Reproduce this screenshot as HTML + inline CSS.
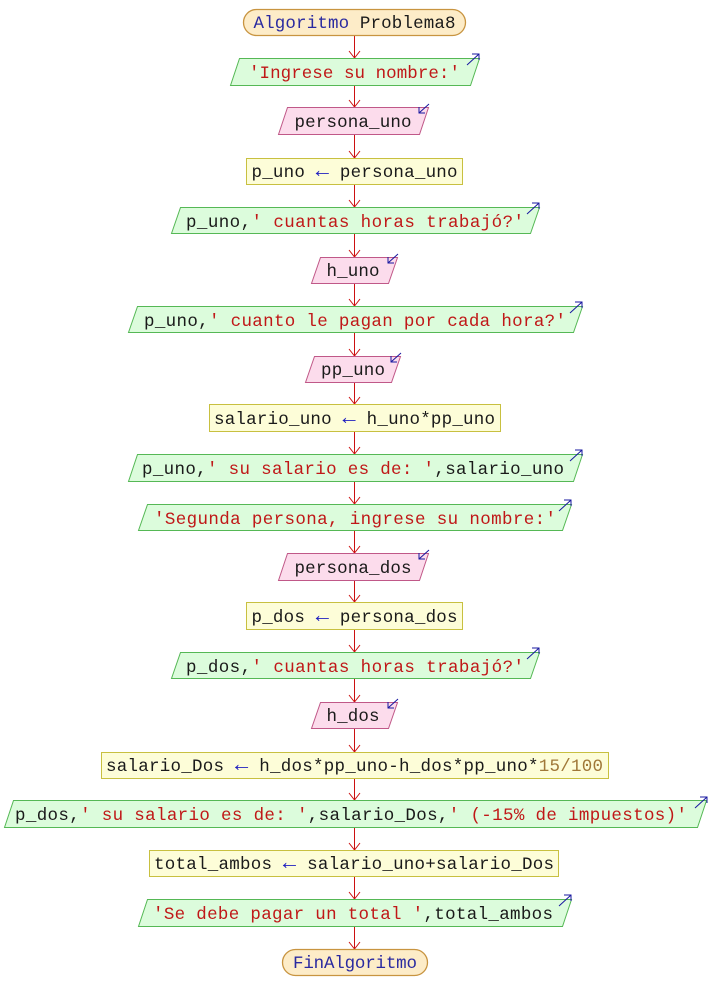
<!DOCTYPE html>
<html><head><meta charset="utf-8"><style>
html,body{margin:0;padding:0;background:#fff;width:709px;height:1007px;overflow:hidden}
svg{display:block}
text{font-family:"Liberation Mono","Courier New",monospace;font-size:17.5px;fill:#1a1a1a}
.s{fill:#c01818}.k{fill:#2a2aa0}.n{fill:#a07838}.b{fill:#2020c0;font-size:22px}
.o{fill:#dcfcdc;stroke:#55b855;stroke-width:1}
.i{fill:#fcdcec;stroke:#c05888;stroke-width:1}
.r{fill:#fdfdd8;stroke:#c8c040;stroke-width:1}
.t{fill:#fdecc8;stroke:#c89440;stroke-width:1.3}
.a{stroke:#cc1010;stroke-width:1;fill:none}
.ba{stroke:#1818a0;stroke-width:1;fill:none}
</style></head><body>
<svg width="709" height="1007" viewBox="0 0 709 1007" xmlns="http://www.w3.org/2000/svg">
<g class="a">
<path d="M354.5 35V58M349 51l5.5 7 5.5-7"/>
<path d="M354.5 85V107M349 100l5.5 7 5.5-7"/>
<path d="M354.5 134V158M349 151l5.5 7 5.5-7"/>
<path d="M354.5 184V207M349 200l5.5 7 5.5-7"/>
<path d="M354.5 233V257M349 250l5.5 7 5.5-7"/>
<path d="M354.5 283V306M349 299l5.5 7 5.5-7"/>
<path d="M354.5 332V356M349 349l5.5 7 5.5-7"/>
<path d="M354.5 382V404M349 397l5.5 7 5.5-7"/>
<path d="M354.5 431V454M349 447l5.5 7 5.5-7"/>
<path d="M354.5 481V504M349 497l5.5 7 5.5-7"/>
<path d="M354.5 530V553M349 546l5.5 7 5.5-7"/>
<path d="M354.5 580V602M349 595l5.5 7 5.5-7"/>
<path d="M354.5 629V652M349 645l5.5 7 5.5-7"/>
<path d="M354.5 678V702M349 695l5.5 7 5.5-7"/>
<path d="M354.5 728V752M349 745l5.5 7 5.5-7"/>
<path d="M354.5 778V800M349 793l5.5 7 5.5-7"/>
<path d="M354.5 827V850M349 843l5.5 7 5.5-7"/>
<path d="M354.5 876V899M349 892l5.5 7 5.5-7"/>
<path d="M354.5 926V949M349 942l5.5 7 5.5-7"/>
</g>
<rect class="t" x="243.5" y="9.5" width="222" height="26" rx="13"/>
<text x="354.5" y="28" text-anchor="middle" textLength="202" lengthAdjust="spacing"><tspan class="k">Algoritmo</tspan> Problema8</text>

<polygon class="o" points="239.5,58.5 479.5,58.5 470.5,85.5 230.5,85.5"/>
<text x="354.5" y="78" text-anchor="middle" class="s" textLength="211" lengthAdjust="spacing">'Ingrese su nombre:'</text>
<path class="ba" d="M467 65l12-11M472 54h7v6"/>

<polygon class="i" points="287.5,107.5 428.5,107.5 419.5,134.5 278.5,134.5"/>
<text x="353" y="127" text-anchor="middle" textLength="117" lengthAdjust="spacing">persona_uno</text>
<path class="ba" d="M429 104l-10 9M419 107v6h6"/>

<rect class="r" x="246.5" y="158.5" width="216" height="26"/>
<text x="354.5" y="177" text-anchor="middle" textLength="206" lengthAdjust="spacing">p_uno <tspan class="b">←</tspan> persona_uno</text>

<polygon class="o" points="180.5,207.5 539.5,207.5 530.5,233.5 171.5,233.5"/>
<text x="355" y="227" text-anchor="middle" textLength="338" lengthAdjust="spacing">p_uno,<tspan class="s">' cuantas horas trabajó?'</tspan></text>
<path class="ba" d="M527 214l12-11M532 203h7v6"/>

<polygon class="i" points="320.5,257.5 397.5,257.5 388.5,283.5 311.5,283.5"/>
<text x="353" y="276" text-anchor="middle" textLength="53" lengthAdjust="spacing">h_uno</text>
<path class="ba" d="M398 254l-10 9M388 257v6h6"/>

<polygon class="o" points="137.5,306.5 582.5,306.5 573.5,332.5 128.5,332.5"/>
<text x="355" y="326" text-anchor="middle" textLength="422" lengthAdjust="spacing">p_uno,<tspan class="s">' cuanto le pagan por cada hora?'</tspan></text>
<path class="ba" d="M570 313l12-11M575 302h7v6"/>

<polygon class="i" points="314.5,356.5 400.5,356.5 391.5,382.5 305.5,382.5"/>
<text x="353" y="375" text-anchor="middle" textLength="64" lengthAdjust="spacing">pp_uno</text>
<path class="ba" d="M401 353l-10 9M391 356v6h6"/>

<rect class="r" x="209.5" y="404.5" width="291" height="27"/>
<text x="354.5" y="424" text-anchor="middle" textLength="281" lengthAdjust="spacing">salario_uno <tspan class="b">←</tspan> h_uno*pp_uno</text>

<polygon class="o" points="137.5,454.5 582.5,454.5 573.5,481.5 128.5,481.5"/>
<text x="353" y="474" text-anchor="middle" textLength="422" lengthAdjust="spacing">p_uno,<tspan class="s">' su salario es de: '</tspan>,salario_uno</text>
<path class="ba" d="M570 461l12-11M575 450h7v6"/>

<polygon class="o" points="147.5,504.5 571.5,504.5 562.5,530.5 138.5,530.5"/>
<text x="355" y="524" text-anchor="middle" class="s" textLength="402" lengthAdjust="spacing">'Segunda persona, ingrese su nombre:'</text>
<path class="ba" d="M559 511l12-11M564 500h7v6"/>

<polygon class="i" points="287.5,553.5 428.5,553.5 419.5,580.5 278.5,580.5"/>
<text x="353" y="573" text-anchor="middle" textLength="117" lengthAdjust="spacing">persona_dos</text>
<path class="ba" d="M429 550l-10 9M419 553v6h6"/>

<rect class="r" x="246.5" y="602.5" width="216" height="27"/>
<text x="354.5" y="622" text-anchor="middle" textLength="206" lengthAdjust="spacing">p_dos <tspan class="b">←</tspan> persona_dos</text>

<polygon class="o" points="180.5,652.5 539.5,652.5 530.5,678.5 171.5,678.5"/>
<text x="355" y="672" text-anchor="middle" textLength="338" lengthAdjust="spacing">p_dos,<tspan class="s">' cuantas horas trabajó?'</tspan></text>
<path class="ba" d="M527 659l12-11M532 648h7v6"/>

<polygon class="i" points="320.5,702.5 397.5,702.5 388.5,728.5 311.5,728.5"/>
<text x="353" y="721" text-anchor="middle" textLength="53" lengthAdjust="spacing">h_dos</text>
<path class="ba" d="M398 699l-10 9M388 702v6h6"/>

<rect class="r" x="101.5" y="752.5" width="507" height="26"/>
<text x="354.5" y="771" text-anchor="middle" textLength="497" lengthAdjust="spacing">salario_Dos <tspan class="b">←</tspan> h_dos*pp_uno-h_dos*pp_uno*<tspan class="n">15/100</tspan></text>

<polygon class="o" points="13.5,800.5 706.5,800.5 697.5,827.5 4.5,827.5"/>
<text x="351" y="820" text-anchor="middle" textLength="672" lengthAdjust="spacing">p_dos,<tspan class="s">' su salario es de: '</tspan>,salario_Dos,<tspan class="s">' (-15% de impuestos)'</tspan></text>
<path class="ba" d="M695 808l12-11M700 797h7v6"/>

<rect class="r" x="149.5" y="850.5" width="409" height="26"/>
<text x="354" y="869" text-anchor="middle" textLength="400" lengthAdjust="spacing">total_ambos <tspan class="b">←</tspan> salario_uno+salario_Dos</text>

<polygon class="o" points="147.5,899.5 571.5,899.5 562.5,926.5 138.5,926.5"/>
<text x="353" y="919" text-anchor="middle" textLength="400" lengthAdjust="spacing"><tspan class="s">'Se debe pagar un total '</tspan>,total_ambos</text>
<path class="ba" d="M559 906l12-11M564 895h7v6"/>

<rect class="t" x="282.5" y="949.5" width="145" height="26" rx="13"/>
<text x="355" y="968" text-anchor="middle" class="k" textLength="124" lengthAdjust="spacing">FinAlgoritmo</text>
</svg>
</body></html>
